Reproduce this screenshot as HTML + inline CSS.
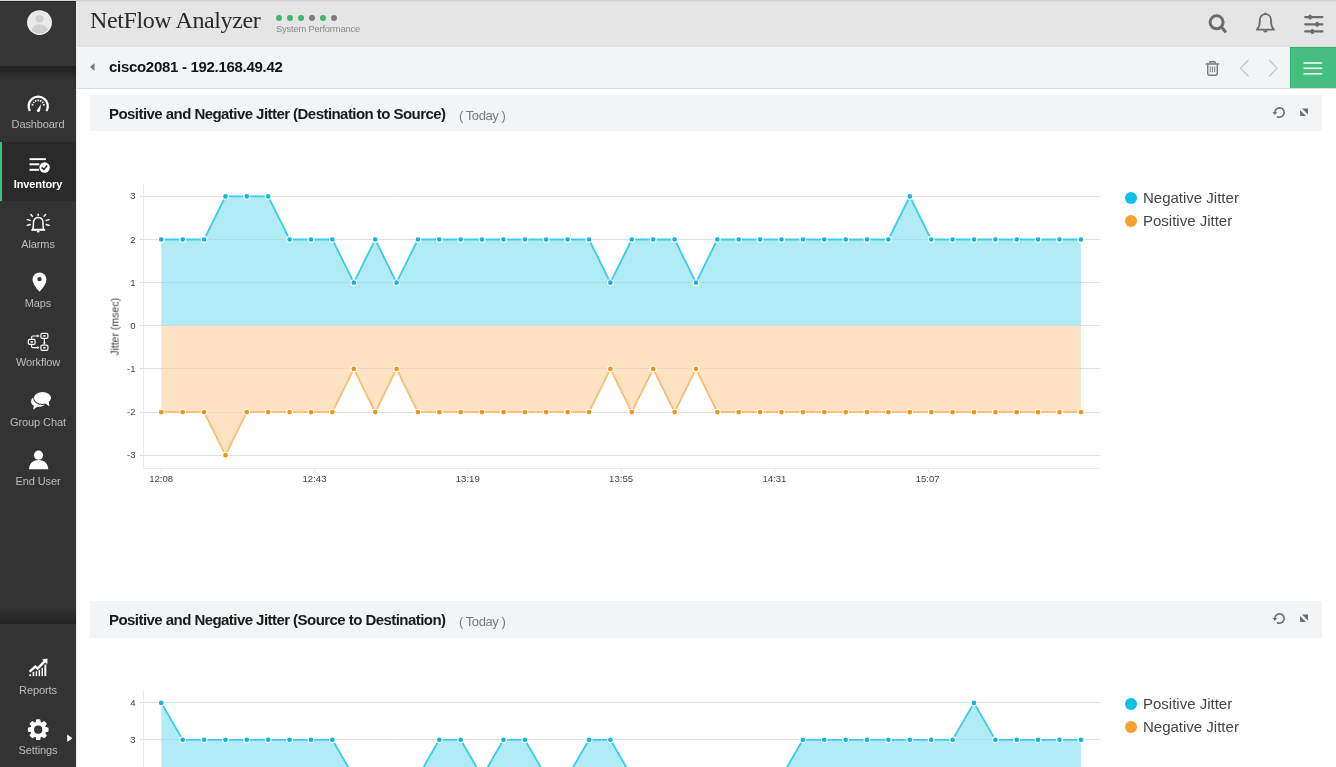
<!DOCTYPE html>
<html><head><meta charset="utf-8">
<style>
*{margin:0;padding:0;box-sizing:border-box}
html,body{width:1336px;height:767px;overflow:hidden;background:#fff;font-family:"Liberation Sans",sans-serif}
body *{will-change:transform}
.abs{position:absolute}
#side{position:absolute;left:0;top:0;width:76px;height:767px;background:#333}
#side .top{position:absolute;left:0;top:0;width:76px;height:66px;background:#363636}
#side .shade{position:absolute;left:0;top:66px;width:76px;height:14px;background:linear-gradient(#222 0,#262626 40%,#333 100%)}
#side .item{position:absolute;left:0;width:76px;text-align:center;color:#bdbdbd;font-size:11px;letter-spacing:-0.1px}
#side .item svg{position:absolute;left:0;top:0}
#side .lbl{position:absolute;left:0;width:76px;text-align:center}
#side .sel{background:#2a2a2a;color:#fff;font-weight:bold}
#side .selbar{position:absolute;left:0;top:142px;width:2px;height:59px;background:#3fc07a}
#side .bshade{position:absolute;left:0;top:606px;width:76px;height:18px;background:linear-gradient(#343434,#2c2c2c 45%,#232323)}
#vline{position:absolute;left:76px;top:1px;width:1px;height:766px;background:#ececec}
#hdr{position:absolute;left:76px;top:0;width:1260px;height:47px;background:#e5e5e5;border-top:1px solid #d4d4d4;border-bottom:1px solid #dedede;box-shadow:inset 0 1px 0 #dcdcdc}
#topline{position:absolute;left:0;top:0;width:76px;height:1px;background:#d4d4d4}
#side .topedge{position:absolute;left:0;top:1px;width:76px;height:1px;background:#222}
#title{position:absolute;left:89.5px;top:6.5px;font-family:"Liberation Serif",serif;font-size:24px;color:#2a2a2a;letter-spacing:-0.4px;white-space:nowrap}
.dot{position:absolute;top:14.9px;width:6.2px;height:6.2px;border-radius:50%}
#sysperf{position:absolute;left:276px;top:22.5px;font-size:9.4px;color:#8a8a8a;letter-spacing:-0.2px}
#crumb{position:absolute;left:77px;top:47px;width:1259px;height:42px;background:#f3f4f6;border-bottom:1px solid #dcdcdc}
#crumbtxt{position:absolute;left:108.5px;top:58px;font-size:15px;font-weight:bold;color:#141414;letter-spacing:-0.3px}
#green{position:absolute;left:1290px;top:47px;width:46px;height:41px;background:#45bf7f;box-shadow:inset 1px 1px 0 #2fb469}
.panel{position:absolute;left:90px;width:1232px;height:36px;background:#f3f4f6}
.ptitle{position:absolute;left:19px;top:10px;font-size:15px;font-weight:bold;color:#1a1a1a;letter-spacing:-0.55px;white-space:nowrap}
.ptoday{position:absolute;left:369px;top:13px;font-size:13px;color:#7a7a7a;letter-spacing:-0.45px;white-space:nowrap}
.legend{position:absolute;left:1125px;font-size:15px;color:#444}
.legend div{position:relative;height:22.5px;padding-left:18px}
.legend i{position:absolute;left:0;top:3px;width:12px;height:12px;border-radius:50%}
svg.chart{position:absolute;left:0;top:0}
</style></head><body>

<div id="side">
  <div class="top"></div>
  <div class="topedge"></div>
  <div class="shade"></div>
  <svg class="abs" style="left:0;top:0" width="76" height="40" viewBox="0 0 76 40">
    <circle cx="39.5" cy="22.6" r="12.4" fill="#f4f4f4"/>
    <circle cx="39.5" cy="22.6" r="11.2" fill="#e9e9e9"/>
    <circle cx="39.5" cy="18.8" r="3.9" fill="#cfcfcf"/>
    <path d="M31.54 30.36 A8.2 6.8 0 0 1 47.82 30.04 A11.2 11.2 0 0 1 31.54 30.36Z" fill="#cfcfcf"/>
  </svg>

  <div class="item" style="top:92px;height:50px">
    <svg width="76" height="24" viewBox="0 0 76 24">
      <path d="M29.89 19 A9.6 9.6 0 1 1 46.51 19" fill="none" stroke="#fff" stroke-width="2.3"/>
      <g stroke="#fff" stroke-width="1.5"><line x1="33.37" y1="12.91" x2="31.63" y2="12.44"/><line x1="34.37" y1="10.99" x2="32.99" y2="9.83"/><line x1="36.09" y1="9.67" x2="35.33" y2="8.04"/><line x1="38.20" y1="9.20" x2="38.20" y2="7.40"/><line x1="40.31" y1="9.67" x2="41.07" y2="8.04"/><line x1="42.03" y1="10.99" x2="43.41" y2="9.83"/><line x1="43.03" y1="12.91" x2="44.77" y2="12.44"/></g>
      <path d="M36.7 18.4 Q36.9 20 38.5 20 Q40.1 19.9 40.1 18.6 L41 12.2Z" fill="#fff"/>
    </svg>
    <div class="lbl" style="top:26px">Dashboard</div>
  </div>

  <div class="item sel" style="top:142px;height:59px">
    <svg width="76" height="40" viewBox="0 0 76 40">
      <g fill="#fff"><rect x="29.5" y="16.2" width="16.4" height="1.9"/><rect x="29.5" y="21.3" width="10" height="2"/><rect x="29.5" y="26.8" width="9.6" height="2"/></g>
      <circle cx="44.6" cy="25.5" r="5.9" fill="#2a2a2a"/>
      <circle cx="44.6" cy="25.5" r="5.2" fill="#fff"/>
      <path d="M41.6 25.4 L43.9 27.4 L47.2 23.6" fill="none" stroke="#2a2a2a" stroke-width="1.6"/>
    </svg>
    <div class="lbl" style="top:36px">Inventory</div>
  </div>
  <div class="selbar"></div>

  <div class="item" style="top:210px;height:50px">
    <svg width="76" height="26" viewBox="0 0 76 26">
      <path d="M32.6 19.6 C33.6 18 33.4 16 33.4 13 C33.4 9.6 35.4 7.6 38.2 7.6 C41 7.6 43 9.6 43 13 C43 16 42.8 18 43.8 19.6 Z" fill="none" stroke="#fff" stroke-width="1.5" stroke-linejoin="round"/>
      <rect x="31" y="19.2" width="14.4" height="1.6" rx="0.8" fill="#fff"/>
      <path d="M36.7 21 A1.5 1.5 0 0 0 39.7 21Z" fill="#fff"/>
      <g stroke="#fff" stroke-width="1.4" stroke-linecap="round">
        <line x1="38.2" y1="4.2" x2="38.2" y2="5.6"/>
        <line x1="30.8" y1="4.5" x2="32.3" y2="6.2"/><line x1="45.6" y1="4.5" x2="44.1" y2="6.2"/>
        <line x1="27.2" y1="9.6" x2="30.2" y2="10.4"/><line x1="49.2" y1="9.6" x2="46.2" y2="10.4"/>
        <line x1="27.2" y1="15.4" x2="30.2" y2="14.5"/><line x1="49.2" y1="15.4" x2="46.2" y2="14.5"/>
      </g>
    </svg>
    <div class="lbl" style="top:28px">Alarms</div>
  </div>

  <div class="item" style="top:270px;height:50px">
    <svg width="76" height="26" viewBox="0 0 76 26">
      <path d="M39.5 21.8 C35.2 17 32.6 13.6 32.6 9.3 A6.9 6.9 0 0 1 46.4 9.3 C46.4 13.6 43.8 17 39.5 21.8Z" fill="#fff"/>
      <circle cx="39.5" cy="9.1" r="2.2" fill="#333"/>
    </svg>
    <div class="lbl" style="top:27px">Maps</div>
  </div>

  <div class="item" style="top:330px;height:50px">
    <svg width="76" height="26" viewBox="0 0 76 26">
      <g fill="none" stroke="#fff" stroke-width="1.2">
        <rect x="28.3" y="9.3" width="6.8" height="5" rx="1.4"/>
        <rect x="40.9" y="3.4" width="7" height="5" rx="1.4"/>
        <rect x="40.9" y="15.1" width="7" height="5.2" rx="1.4"/>
        <path d="M31.6 9.3 V7.2 Q31.6 6 32.8 6 H37.6 M31.6 14.3 V16.4 Q31.6 17.6 32.8 17.6 H37.6 M44.4 8.4 V13"/>
      </g>
      <g fill="#fff"><path d="M37.2 4.6 L39.6 6 L37.2 7.4Z M37.2 16.2 L39.6 17.6 L37.2 19Z M43 12.6 L45.8 12.6 L44.4 14.8Z"/>
      <rect x="30.6" y="11.2" width="2.4" height="1.4"/><rect x="43.2" y="5.2" width="2.4" height="1.4"/><rect x="43.2" y="17" width="2.4" height="1.4"/></g>
    </svg>
    <div class="lbl" style="top:26px">Workflow</div>
  </div>

  <div class="item" style="top:390px;height:50px">
    <svg width="76" height="26" viewBox="0 0 76 26">
      <ellipse cx="38.6" cy="11.4" rx="7.6" ry="5.6" fill="#fff"/>
      <path d="M34 14.5 L33.2 19.8 L39 15.5Z" fill="#fff"/>
      <ellipse cx="42.5" cy="8" rx="9.3" ry="6.9" fill="#333"/>
      <path d="M44.5 13 L50.2 17.4 L49.4 11Z" fill="#333"/>
      <ellipse cx="42.5" cy="8" rx="8.5" ry="6.1" fill="#fff"/>
      <path d="M45 13 L49.4 16.6 L48.8 11.6Z" fill="#fff"/>
    </svg>
    <div class="lbl" style="top:26px">Group Chat</div>
  </div>

  <div class="item" style="top:448px;height:50px">
    <svg width="76" height="26" viewBox="0 0 76 26">
      <circle cx="38.5" cy="7.2" r="4.6" fill="#fff"/>
      <path d="M29 21.3 C29.2 15 33.5 12 38.6 12 C43.7 12 48 15 48.3 21.3Z" fill="#fff"/>
    </svg>
    <div class="lbl" style="top:27px">End User</div>
  </div>

  <div class="bshade"></div>

  <div class="item" style="top:655px;height:50px">
    <svg width="76" height="26" viewBox="0 0 76 26">
      <g fill="#fff">
        <rect x="29.3" y="19.4" width="1.8" height="1.7"/><rect x="32.6" y="16.9" width="1.6" height="4.2"/><rect x="35.7" y="16.2" width="1.4" height="4.9"/><rect x="38.6" y="15" width="1.4" height="6.1"/><rect x="41.5" y="12.9" width="1.5" height="8.2"/><rect x="44.4" y="9.6" width="1.9" height="11.5"/>
      </g>
      <path d="M29.6 16.6 L35.3 11.6 L37.6 13.6 L44.6 6.4" fill="none" stroke="#fff" stroke-width="2.4"/>
      <path d="M42 4.4 L47.5 3.6 L47.3 9.2Z" fill="#fff"/>
    </svg>
    <div class="lbl" style="top:29px">Reports</div>
  </div>

  <div class="item" style="top:716px;height:51px">
    <svg width="76" height="30" viewBox="0 0 76 30">
      <path fill="#fff" d="M36.13,6.96 L36.74,3.96 L39.66,3.96 L40.27,6.96 L41.47,7.46 L44.02,5.76 L46.09,7.83 L44.39,10.38 L44.89,11.58 L47.89,12.19 L47.89,15.11 L44.89,15.72 L44.39,16.92 L46.09,19.47 L44.02,21.54 L41.47,19.84 L40.27,20.34 L39.66,23.34 L36.74,23.34 L36.13,20.34 L34.93,19.84 L32.38,21.54 L30.31,19.47 L32.01,16.92 L31.51,15.72 L28.51,15.11 L28.51,12.19 L31.51,11.58 L32.01,10.38 L30.31,7.83 L32.38,5.76 L34.93,7.46Z" stroke="#fff" stroke-width="1.3" stroke-linejoin="round"/>
      <circle cx="38.2" cy="13.65" r="7.6" fill="#fff"/>
      <circle cx="38.2" cy="13.65" r="4.1" fill="#2a2a2a"/>
      <circle cx="38.2" cy="13.65" r="3.4" fill="#383838"/>
      <path d="M67.2 18.6 L72.4 22.3 L67.2 26Z" fill="#fff"/>
    </svg>
    <div class="lbl" style="top:28px">Settings</div>
  </div>
</div>

<div id="hdr"></div>
<div id="vline"></div>
<div id="topline"></div>
<div id="title">NetFlow Analyzer</div>
<div class="dot" style="left:275.6px;background:#3db86f"></div>
<div class="dot" style="left:286.9px;background:#3db86f"></div>
<div class="dot" style="left:297.9px;background:#3db86f"></div>
<div class="dot" style="left:309.3px;background:#7d7d7d"></div>
<div class="dot" style="left:320.1px;background:#3db86f"></div>
<div class="dot" style="left:331.3px;background:#7d7d7d"></div>
<div id="sysperf">System Performance</div>

<!-- header icons -->
<svg class="abs" style="left:1200px;top:5px" width="136" height="36" viewBox="1200 5 136 36">
  <circle cx="1216.6" cy="22.3" r="6.5" fill="none" stroke="#6b6b6b" stroke-width="3"/>
  <line x1="1221.6" y1="27.3" x2="1225.2" y2="31.4" stroke="#6b6b6b" stroke-width="3" stroke-linecap="round"/>
  <path d="M1256.8 29.6 C1258.8 27.6 1259.8 25.5 1259.8 21.8 L1259.8 19.8 C1259.8 16.5 1262.1 14.2 1265.4 14.2 C1268.7 14.2 1271 16.5 1271 19.8 L1271 21.8 C1271 25.5 1272 27.6 1274 29.6 Z" fill="none" stroke="#6b6b6b" stroke-width="1.8" stroke-linejoin="round"/>
  <path d="M1263 30.2 A2.4 2.4 0 0 0 1267.8 30.2Z" fill="#6b6b6b"/>
  <circle cx="1265.4" cy="13.6" r="1.2" fill="#6b6b6b"/>
  <g stroke="#6b6b6b" stroke-width="2.2" stroke-linecap="round">
    <line x1="1305.2" y1="17.1" x2="1322.4" y2="17.1"/><line x1="1305.2" y1="24.3" x2="1322.4" y2="24.3"/><line x1="1305.2" y1="31.4" x2="1322.4" y2="31.4"/>
  </g>
  <g fill="#6b6b6b"><rect x="1308.5" y="14.6" width="3.2" height="5" rx="1.5"/><rect x="1315.5" y="21.8" width="3.2" height="5" rx="1.5"/><rect x="1310.8" y="28.9" width="3.2" height="5" rx="1.5"/></g>
</svg>

<div id="crumb"></div>
<svg class="abs" style="left:88px;top:60px" width="10" height="14" viewBox="0 0 10 14"><path d="M2 7 L6.5 3 L6.5 11Z" fill="#777"/></svg>
<div id="crumbtxt">cisco2081 - 192.168.49.42</div>
<svg class="abs" style="left:1200px;top:55px" width="90" height="26" viewBox="1200 55 90 26">
  <g fill="none" stroke="#777" stroke-width="1.4">
    <path d="M1206.3 64 H1218.7" stroke-linecap="round"/><path d="M1209.6 63.6 V62.8 Q1209.6 61.7 1210.8 61.7 H1214.2 Q1215.4 61.7 1215.4 62.8 V63.6"/>
    <path d="M1207.7 64.4 V73.6 Q1207.7 75.2 1209.3 75.2 H1215.7 Q1217.3 75.2 1217.3 73.6 V64.4"/>
  </g>
  <g stroke="#888" stroke-width="1.1"><path d="M1210.3 66.6 V72.3 M1212.5 66.6 V72.3 M1214.7 66.6 V72.3"/></g>
  <path d="M1248.6 60 L1240.4 68.2 L1248.6 76.4" fill="none" stroke="#c4c4c4" stroke-width="1.2"/>
  <path d="M1269 60 L1277.2 68.2 L1269 76.4" fill="none" stroke="#c4c4c4" stroke-width="1.2"/>
</svg>
<div id="green"></div>
<svg class="abs" style="left:1290px;top:47px" width="46" height="41" viewBox="0 0 46 41"><g stroke="#fff" stroke-width="1.5"><line x1="13.5" y1="16" x2="32.2" y2="16"/><line x1="13.5" y1="21.3" x2="32.2" y2="21.3"/><line x1="13.5" y1="26.8" x2="32.2" y2="26.8"/></g></svg>

<!-- panel 1 -->
<div class="panel" style="top:95px">
  <div class="ptitle">Positive and Negative Jitter (Destination to Source)</div>
  <div class="ptoday">( Today )</div>
</div>
<!-- panel 2 -->
<div class="panel" style="top:601px;height:37px">
  <div class="ptitle">Positive and Negative Jitter (Source to Destination)</div>
  <div class="ptoday">( Today )</div>
</div>
<svg class="abs" style="left:1260px;top:95px" width="62" height="36" viewBox="1260 95 62 36" id="picons1">
  <path d="M1276.9 116.5 A4.7 4.7 0 1 0 1274.8 111.8" fill="none" stroke="#6f6f6f" stroke-width="1.6"/>
  <path d="M1272.5 112 L1277.2 112 L1274.85 115Z" fill="#6f6f6f"/>
  <path d="M1300 116 L1300 110 L1306 116Z M1302 108.5 L1308 108.5 L1308 114.5Z" fill="#6f6f6f"/>
</svg>
<svg class="abs" style="left:1260px;top:601px" width="62" height="36" viewBox="1260 95 62 36">
  <path d="M1276.9 116.5 A4.7 4.7 0 1 0 1274.8 111.8" fill="none" stroke="#6f6f6f" stroke-width="1.6"/>
  <path d="M1272.5 112 L1277.2 112 L1274.85 115Z" fill="#6f6f6f"/>
  <path d="M1300 116 L1300 110 L1306 116Z M1302 108.5 L1308 108.5 L1308 114.5Z" fill="#6f6f6f"/>
</svg>

<svg class="chart" width="1336" height="767" viewBox="0 0 1336 767"><g stroke="#ebebeb" stroke-width="1"><line x1="139.5" y1="196.5" x2="1099.5" y2="196.5"/><line x1="139.5" y1="239.5" x2="1099.5" y2="239.5"/><line x1="139.5" y1="282.5" x2="1099.5" y2="282.5"/><line x1="139.5" y1="325.5" x2="1099.5" y2="325.5"/><line x1="139.5" y1="368.5" x2="1099.5" y2="368.5"/><line x1="139.5" y1="412.5" x2="1099.5" y2="412.5"/><line x1="139.5" y1="455.5" x2="1099.5" y2="455.5"/><line x1="143.5" y1="183.4" x2="143.5" y2="468.3"/><line x1="143" y1="468.5" x2="1100" y2="468.5"/></g><path d="M161.3,325.8 L161.3,239.5 L182.7,239.5 L204.1,239.5 L225.5,196.4 L246.8,196.4 L268.2,196.4 L289.6,239.5 L311.0,239.5 L332.4,239.5 L353.8,282.7 L375.2,239.5 L396.5,282.7 L417.9,239.5 L439.3,239.5 L460.7,239.5 L482.1,239.5 L503.5,239.5 L524.9,239.5 L546.2,239.5 L567.6,239.5 L589.0,239.5 L610.4,282.7 L631.8,239.5 L653.2,239.5 L674.6,239.5 L696.0,282.7 L717.3,239.5 L738.7,239.5 L760.1,239.5 L781.5,239.5 L802.9,239.5 L824.3,239.5 L845.7,239.5 L867.0,239.5 L888.4,239.5 L909.8,196.4 L931.2,239.5 L952.6,239.5 L974.0,239.5 L995.4,239.5 L1016.7,239.5 L1038.1,239.5 L1059.5,239.5 L1080.9,239.5 L1080.9,325.8 Z" fill="#b1ecf6"/><path d="M161.3,325.8 L161.3,412.1 L182.7,412.1 L204.1,412.1 L225.5,455.2 L246.8,412.1 L268.2,412.1 L289.6,412.1 L311.0,412.1 L332.4,412.1 L353.8,368.9 L375.2,412.1 L396.5,368.9 L417.9,412.1 L439.3,412.1 L460.7,412.1 L482.1,412.1 L503.5,412.1 L524.9,412.1 L546.2,412.1 L567.6,412.1 L589.0,412.1 L610.4,368.9 L631.8,412.1 L653.2,368.9 L674.6,412.1 L696.0,368.9 L717.3,412.1 L738.7,412.1 L760.1,412.1 L781.5,412.1 L802.9,412.1 L824.3,412.1 L845.7,412.1 L867.0,412.1 L888.4,412.1 L909.8,412.1 L931.2,412.1 L952.6,412.1 L974.0,412.1 L995.4,412.1 L1016.7,412.1 L1038.1,412.1 L1059.5,412.1 L1080.9,412.1 L1080.9,325.8 Z" fill="#fde3c3"/><g stroke="#000" stroke-opacity="0.05" stroke-width="1"><line x1="139.5" y1="196.5" x2="1099.5" y2="196.5"/><line x1="139.5" y1="239.5" x2="1099.5" y2="239.5"/><line x1="139.5" y1="282.5" x2="1099.5" y2="282.5"/><line x1="139.5" y1="325.5" x2="1099.5" y2="325.5"/><line x1="139.5" y1="368.5" x2="1099.5" y2="368.5"/><line x1="139.5" y1="412.5" x2="1099.5" y2="412.5"/><line x1="139.5" y1="455.5" x2="1099.5" y2="455.5"/></g><path d="M161.3,239.5 L182.7,239.5 L204.1,239.5 L225.5,196.4 L246.8,196.4 L268.2,196.4 L289.6,239.5 L311.0,239.5 L332.4,239.5 L353.8,282.7 L375.2,239.5 L396.5,282.7 L417.9,239.5 L439.3,239.5 L460.7,239.5 L482.1,239.5 L503.5,239.5 L524.9,239.5 L546.2,239.5 L567.6,239.5 L589.0,239.5 L610.4,282.7 L631.8,239.5 L653.2,239.5 L674.6,239.5 L696.0,282.7 L717.3,239.5 L738.7,239.5 L760.1,239.5 L781.5,239.5 L802.9,239.5 L824.3,239.5 L845.7,239.5 L867.0,239.5 L888.4,239.5 L909.8,196.4 L931.2,239.5 L952.6,239.5 L974.0,239.5 L995.4,239.5 L1016.7,239.5 L1038.1,239.5 L1059.5,239.5 L1080.9,239.5" fill="none" stroke="#3ecde9" stroke-width="1.8" stroke-linejoin="round"/><path d="M161.3,412.1 L182.7,412.1 L204.1,412.1 L225.5,455.2 L246.8,412.1 L268.2,412.1 L289.6,412.1 L311.0,412.1 L332.4,412.1 L353.8,368.9 L375.2,412.1 L396.5,368.9 L417.9,412.1 L439.3,412.1 L460.7,412.1 L482.1,412.1 L503.5,412.1 L524.9,412.1 L546.2,412.1 L567.6,412.1 L589.0,412.1 L610.4,368.9 L631.8,412.1 L653.2,368.9 L674.6,412.1 L696.0,368.9 L717.3,412.1 L738.7,412.1 L760.1,412.1 L781.5,412.1 L802.9,412.1 L824.3,412.1 L845.7,412.1 L867.0,412.1 L888.4,412.1 L909.8,412.1 L931.2,412.1 L952.6,412.1 L974.0,412.1 L995.4,412.1 L1016.7,412.1 L1038.1,412.1 L1059.5,412.1 L1080.9,412.1" fill="none" stroke="#f8bd6e" stroke-width="1.8" stroke-linejoin="round"/><g fill="#0fb6df" stroke="#fff" stroke-width="1.1"><circle cx="161.3" cy="239.5" r="2.9"/><circle cx="182.7" cy="239.5" r="2.9"/><circle cx="204.1" cy="239.5" r="2.9"/><circle cx="225.5" cy="196.4" r="2.9"/><circle cx="246.8" cy="196.4" r="2.9"/><circle cx="268.2" cy="196.4" r="2.9"/><circle cx="289.6" cy="239.5" r="2.9"/><circle cx="311.0" cy="239.5" r="2.9"/><circle cx="332.4" cy="239.5" r="2.9"/><circle cx="353.8" cy="282.7" r="2.9"/><circle cx="375.2" cy="239.5" r="2.9"/><circle cx="396.5" cy="282.7" r="2.9"/><circle cx="417.9" cy="239.5" r="2.9"/><circle cx="439.3" cy="239.5" r="2.9"/><circle cx="460.7" cy="239.5" r="2.9"/><circle cx="482.1" cy="239.5" r="2.9"/><circle cx="503.5" cy="239.5" r="2.9"/><circle cx="524.9" cy="239.5" r="2.9"/><circle cx="546.2" cy="239.5" r="2.9"/><circle cx="567.6" cy="239.5" r="2.9"/><circle cx="589.0" cy="239.5" r="2.9"/><circle cx="610.4" cy="282.7" r="2.9"/><circle cx="631.8" cy="239.5" r="2.9"/><circle cx="653.2" cy="239.5" r="2.9"/><circle cx="674.6" cy="239.5" r="2.9"/><circle cx="696.0" cy="282.7" r="2.9"/><circle cx="717.3" cy="239.5" r="2.9"/><circle cx="738.7" cy="239.5" r="2.9"/><circle cx="760.1" cy="239.5" r="2.9"/><circle cx="781.5" cy="239.5" r="2.9"/><circle cx="802.9" cy="239.5" r="2.9"/><circle cx="824.3" cy="239.5" r="2.9"/><circle cx="845.7" cy="239.5" r="2.9"/><circle cx="867.0" cy="239.5" r="2.9"/><circle cx="888.4" cy="239.5" r="2.9"/><circle cx="909.8" cy="196.4" r="2.9"/><circle cx="931.2" cy="239.5" r="2.9"/><circle cx="952.6" cy="239.5" r="2.9"/><circle cx="974.0" cy="239.5" r="2.9"/><circle cx="995.4" cy="239.5" r="2.9"/><circle cx="1016.7" cy="239.5" r="2.9"/><circle cx="1038.1" cy="239.5" r="2.9"/><circle cx="1059.5" cy="239.5" r="2.9"/><circle cx="1080.9" cy="239.5" r="2.9"/></g><g fill="#f7930f" stroke="#fff" stroke-width="1.1"><circle cx="161.3" cy="412.1" r="2.9"/><circle cx="182.7" cy="412.1" r="2.9"/><circle cx="204.1" cy="412.1" r="2.9"/><circle cx="225.5" cy="455.2" r="2.9"/><circle cx="246.8" cy="412.1" r="2.9"/><circle cx="268.2" cy="412.1" r="2.9"/><circle cx="289.6" cy="412.1" r="2.9"/><circle cx="311.0" cy="412.1" r="2.9"/><circle cx="332.4" cy="412.1" r="2.9"/><circle cx="353.8" cy="368.9" r="2.9"/><circle cx="375.2" cy="412.1" r="2.9"/><circle cx="396.5" cy="368.9" r="2.9"/><circle cx="417.9" cy="412.1" r="2.9"/><circle cx="439.3" cy="412.1" r="2.9"/><circle cx="460.7" cy="412.1" r="2.9"/><circle cx="482.1" cy="412.1" r="2.9"/><circle cx="503.5" cy="412.1" r="2.9"/><circle cx="524.9" cy="412.1" r="2.9"/><circle cx="546.2" cy="412.1" r="2.9"/><circle cx="567.6" cy="412.1" r="2.9"/><circle cx="589.0" cy="412.1" r="2.9"/><circle cx="610.4" cy="368.9" r="2.9"/><circle cx="631.8" cy="412.1" r="2.9"/><circle cx="653.2" cy="368.9" r="2.9"/><circle cx="674.6" cy="412.1" r="2.9"/><circle cx="696.0" cy="368.9" r="2.9"/><circle cx="717.3" cy="412.1" r="2.9"/><circle cx="738.7" cy="412.1" r="2.9"/><circle cx="760.1" cy="412.1" r="2.9"/><circle cx="781.5" cy="412.1" r="2.9"/><circle cx="802.9" cy="412.1" r="2.9"/><circle cx="824.3" cy="412.1" r="2.9"/><circle cx="845.7" cy="412.1" r="2.9"/><circle cx="867.0" cy="412.1" r="2.9"/><circle cx="888.4" cy="412.1" r="2.9"/><circle cx="909.8" cy="412.1" r="2.9"/><circle cx="931.2" cy="412.1" r="2.9"/><circle cx="952.6" cy="412.1" r="2.9"/><circle cx="974.0" cy="412.1" r="2.9"/><circle cx="995.4" cy="412.1" r="2.9"/><circle cx="1016.7" cy="412.1" r="2.9"/><circle cx="1038.1" cy="412.1" r="2.9"/><circle cx="1059.5" cy="412.1" r="2.9"/><circle cx="1080.9" cy="412.1" r="2.9"/></g><g font-family="Liberation Sans, sans-serif" font-size="9.6" fill="#444"><text x="135.5" y="199.4" text-anchor="end">3</text><text x="135.5" y="242.5" text-anchor="end">2</text><text x="135.5" y="285.7" text-anchor="end">1</text><text x="135.5" y="328.8" text-anchor="end">0</text><text x="135.5" y="371.9" text-anchor="end">-1</text><text x="135.5" y="415.1" text-anchor="end">-2</text><text x="135.5" y="458.2" text-anchor="end">-3</text><line x1="161.5" y1="469" x2="161.5" y2="472" stroke="#ebebeb"/><text x="161.2" y="482.0" text-anchor="middle">12:08</text><line x1="314.5" y1="469" x2="314.5" y2="472" stroke="#ebebeb"/><text x="314.5" y="482.0" text-anchor="middle">12:43</text><line x1="468.5" y1="469" x2="468.5" y2="472" stroke="#ebebeb"/><text x="467.8" y="482.0" text-anchor="middle">13:19</text><line x1="621.5" y1="469" x2="621.5" y2="472" stroke="#ebebeb"/><text x="621.1" y="482.0" text-anchor="middle">13:55</text><line x1="774.5" y1="469" x2="774.5" y2="472" stroke="#ebebeb"/><text x="774.4" y="482.0" text-anchor="middle">14:31</text><line x1="928.5" y1="469" x2="928.5" y2="472" stroke="#ebebeb"/><text x="927.7" y="482.0" text-anchor="middle">15:07</text><text transform="translate(118.6,326.8) rotate(-90)" text-anchor="middle" font-size="10.5" fill="#3a3a3a">Jitter (msec)</text></g><g stroke="#ebebeb" stroke-width="1"><line x1="139.5" y1="702.5" x2="1099.5" y2="702.5"/><line x1="139.5" y1="739.5" x2="1099.5" y2="739.5"/><line x1="139.5" y1="776.5" x2="1099.5" y2="776.5"/><line x1="139.5" y1="813.5" x2="1099.5" y2="813.5"/><line x1="139.5" y1="850.5" x2="1099.5" y2="850.5"/><line x1="139.5" y1="887.5" x2="1099.5" y2="887.5"/><line x1="139.5" y1="924.5" x2="1099.5" y2="924.5"/><line x1="139.5" y1="961.5" x2="1099.5" y2="961.5"/><line x1="139.5" y1="998.5" x2="1099.5" y2="998.5"/><line x1="143.5" y1="689.9" x2="143.5" y2="1011.2"/><line x1="143" y1="1011.5" x2="1100" y2="1011.5"/></g><path d="M161.3,850.5 L161.3,702.9 L182.7,739.8 L204.1,739.8 L225.5,739.8 L246.8,739.8 L268.2,739.8 L289.6,739.8 L311.0,739.8 L332.4,739.8 L353.8,776.7 L375.2,776.7 L396.5,776.7 L417.9,776.7 L439.3,739.8 L460.7,739.8 L482.1,776.7 L503.5,739.8 L524.9,739.8 L546.2,776.7 L567.6,776.7 L589.0,739.8 L610.4,739.8 L631.8,776.7 L653.2,776.7 L674.6,776.7 L696.0,776.7 L717.3,776.7 L738.7,776.7 L760.1,776.7 L781.5,776.7 L802.9,739.8 L824.3,739.8 L845.7,739.8 L867.0,739.8 L888.4,739.8 L909.8,739.8 L931.2,739.8 L952.6,739.8 L974.0,702.9 L995.4,739.8 L1016.7,739.8 L1038.1,739.8 L1059.5,739.8 L1080.9,739.8 L1080.9,850.5 Z" fill="#b1ecf6"/><path d="M161.3,850.5 L161.3,924.3 L182.7,924.3 L204.1,924.3 L225.5,924.3 L246.8,924.3 L268.2,924.3 L289.6,924.3 L311.0,924.3 L332.4,924.3 L353.8,924.3 L375.2,924.3 L396.5,924.3 L417.9,924.3 L439.3,924.3 L460.7,924.3 L482.1,924.3 L503.5,924.3 L524.9,924.3 L546.2,924.3 L567.6,924.3 L589.0,924.3 L610.4,924.3 L631.8,924.3 L653.2,924.3 L674.6,924.3 L696.0,924.3 L717.3,924.3 L738.7,924.3 L760.1,924.3 L781.5,924.3 L802.9,924.3 L824.3,924.3 L845.7,924.3 L867.0,924.3 L888.4,924.3 L909.8,924.3 L931.2,924.3 L952.6,924.3 L974.0,924.3 L995.4,924.3 L1016.7,924.3 L1038.1,924.3 L1059.5,924.3 L1080.9,924.3 L1080.9,850.5 Z" fill="#fde3c3"/><g stroke="#000" stroke-opacity="0.05" stroke-width="1"><line x1="139.5" y1="702.5" x2="1099.5" y2="702.5"/><line x1="139.5" y1="739.5" x2="1099.5" y2="739.5"/><line x1="139.5" y1="776.5" x2="1099.5" y2="776.5"/><line x1="139.5" y1="813.5" x2="1099.5" y2="813.5"/><line x1="139.5" y1="850.5" x2="1099.5" y2="850.5"/><line x1="139.5" y1="887.5" x2="1099.5" y2="887.5"/><line x1="139.5" y1="924.5" x2="1099.5" y2="924.5"/><line x1="139.5" y1="961.5" x2="1099.5" y2="961.5"/><line x1="139.5" y1="998.5" x2="1099.5" y2="998.5"/></g><path d="M161.3,702.9 L182.7,739.8 L204.1,739.8 L225.5,739.8 L246.8,739.8 L268.2,739.8 L289.6,739.8 L311.0,739.8 L332.4,739.8 L353.8,776.7 L375.2,776.7 L396.5,776.7 L417.9,776.7 L439.3,739.8 L460.7,739.8 L482.1,776.7 L503.5,739.8 L524.9,739.8 L546.2,776.7 L567.6,776.7 L589.0,739.8 L610.4,739.8 L631.8,776.7 L653.2,776.7 L674.6,776.7 L696.0,776.7 L717.3,776.7 L738.7,776.7 L760.1,776.7 L781.5,776.7 L802.9,739.8 L824.3,739.8 L845.7,739.8 L867.0,739.8 L888.4,739.8 L909.8,739.8 L931.2,739.8 L952.6,739.8 L974.0,702.9 L995.4,739.8 L1016.7,739.8 L1038.1,739.8 L1059.5,739.8 L1080.9,739.8" fill="none" stroke="#3ecde9" stroke-width="1.8" stroke-linejoin="round"/><path d="M161.3,924.3 L182.7,924.3 L204.1,924.3 L225.5,924.3 L246.8,924.3 L268.2,924.3 L289.6,924.3 L311.0,924.3 L332.4,924.3 L353.8,924.3 L375.2,924.3 L396.5,924.3 L417.9,924.3 L439.3,924.3 L460.7,924.3 L482.1,924.3 L503.5,924.3 L524.9,924.3 L546.2,924.3 L567.6,924.3 L589.0,924.3 L610.4,924.3 L631.8,924.3 L653.2,924.3 L674.6,924.3 L696.0,924.3 L717.3,924.3 L738.7,924.3 L760.1,924.3 L781.5,924.3 L802.9,924.3 L824.3,924.3 L845.7,924.3 L867.0,924.3 L888.4,924.3 L909.8,924.3 L931.2,924.3 L952.6,924.3 L974.0,924.3 L995.4,924.3 L1016.7,924.3 L1038.1,924.3 L1059.5,924.3 L1080.9,924.3" fill="none" stroke="#f8bd6e" stroke-width="1.8" stroke-linejoin="round"/><g fill="#0fb6df" stroke="#fff" stroke-width="1.1"><circle cx="161.3" cy="702.9" r="2.9"/><circle cx="182.7" cy="739.8" r="2.9"/><circle cx="204.1" cy="739.8" r="2.9"/><circle cx="225.5" cy="739.8" r="2.9"/><circle cx="246.8" cy="739.8" r="2.9"/><circle cx="268.2" cy="739.8" r="2.9"/><circle cx="289.6" cy="739.8" r="2.9"/><circle cx="311.0" cy="739.8" r="2.9"/><circle cx="332.4" cy="739.8" r="2.9"/><circle cx="353.8" cy="776.7" r="2.9"/><circle cx="375.2" cy="776.7" r="2.9"/><circle cx="396.5" cy="776.7" r="2.9"/><circle cx="417.9" cy="776.7" r="2.9"/><circle cx="439.3" cy="739.8" r="2.9"/><circle cx="460.7" cy="739.8" r="2.9"/><circle cx="482.1" cy="776.7" r="2.9"/><circle cx="503.5" cy="739.8" r="2.9"/><circle cx="524.9" cy="739.8" r="2.9"/><circle cx="546.2" cy="776.7" r="2.9"/><circle cx="567.6" cy="776.7" r="2.9"/><circle cx="589.0" cy="739.8" r="2.9"/><circle cx="610.4" cy="739.8" r="2.9"/><circle cx="631.8" cy="776.7" r="2.9"/><circle cx="653.2" cy="776.7" r="2.9"/><circle cx="674.6" cy="776.7" r="2.9"/><circle cx="696.0" cy="776.7" r="2.9"/><circle cx="717.3" cy="776.7" r="2.9"/><circle cx="738.7" cy="776.7" r="2.9"/><circle cx="760.1" cy="776.7" r="2.9"/><circle cx="781.5" cy="776.7" r="2.9"/><circle cx="802.9" cy="739.8" r="2.9"/><circle cx="824.3" cy="739.8" r="2.9"/><circle cx="845.7" cy="739.8" r="2.9"/><circle cx="867.0" cy="739.8" r="2.9"/><circle cx="888.4" cy="739.8" r="2.9"/><circle cx="909.8" cy="739.8" r="2.9"/><circle cx="931.2" cy="739.8" r="2.9"/><circle cx="952.6" cy="739.8" r="2.9"/><circle cx="974.0" cy="702.9" r="2.9"/><circle cx="995.4" cy="739.8" r="2.9"/><circle cx="1016.7" cy="739.8" r="2.9"/><circle cx="1038.1" cy="739.8" r="2.9"/><circle cx="1059.5" cy="739.8" r="2.9"/><circle cx="1080.9" cy="739.8" r="2.9"/></g><g fill="#f7930f" stroke="#fff" stroke-width="1.1"><circle cx="161.3" cy="924.3" r="2.9"/><circle cx="182.7" cy="924.3" r="2.9"/><circle cx="204.1" cy="924.3" r="2.9"/><circle cx="225.5" cy="924.3" r="2.9"/><circle cx="246.8" cy="924.3" r="2.9"/><circle cx="268.2" cy="924.3" r="2.9"/><circle cx="289.6" cy="924.3" r="2.9"/><circle cx="311.0" cy="924.3" r="2.9"/><circle cx="332.4" cy="924.3" r="2.9"/><circle cx="353.8" cy="924.3" r="2.9"/><circle cx="375.2" cy="924.3" r="2.9"/><circle cx="396.5" cy="924.3" r="2.9"/><circle cx="417.9" cy="924.3" r="2.9"/><circle cx="439.3" cy="924.3" r="2.9"/><circle cx="460.7" cy="924.3" r="2.9"/><circle cx="482.1" cy="924.3" r="2.9"/><circle cx="503.5" cy="924.3" r="2.9"/><circle cx="524.9" cy="924.3" r="2.9"/><circle cx="546.2" cy="924.3" r="2.9"/><circle cx="567.6" cy="924.3" r="2.9"/><circle cx="589.0" cy="924.3" r="2.9"/><circle cx="610.4" cy="924.3" r="2.9"/><circle cx="631.8" cy="924.3" r="2.9"/><circle cx="653.2" cy="924.3" r="2.9"/><circle cx="674.6" cy="924.3" r="2.9"/><circle cx="696.0" cy="924.3" r="2.9"/><circle cx="717.3" cy="924.3" r="2.9"/><circle cx="738.7" cy="924.3" r="2.9"/><circle cx="760.1" cy="924.3" r="2.9"/><circle cx="781.5" cy="924.3" r="2.9"/><circle cx="802.9" cy="924.3" r="2.9"/><circle cx="824.3" cy="924.3" r="2.9"/><circle cx="845.7" cy="924.3" r="2.9"/><circle cx="867.0" cy="924.3" r="2.9"/><circle cx="888.4" cy="924.3" r="2.9"/><circle cx="909.8" cy="924.3" r="2.9"/><circle cx="931.2" cy="924.3" r="2.9"/><circle cx="952.6" cy="924.3" r="2.9"/><circle cx="974.0" cy="924.3" r="2.9"/><circle cx="995.4" cy="924.3" r="2.9"/><circle cx="1016.7" cy="924.3" r="2.9"/><circle cx="1038.1" cy="924.3" r="2.9"/><circle cx="1059.5" cy="924.3" r="2.9"/><circle cx="1080.9" cy="924.3" r="2.9"/></g><g font-family="Liberation Sans, sans-serif" font-size="9.6" fill="#444"><text x="135.5" y="705.9" text-anchor="end">4</text><text x="135.5" y="742.8" text-anchor="end">3</text><text x="135.5" y="779.7" text-anchor="end">2</text><text x="135.5" y="816.6" text-anchor="end">1</text><text x="135.5" y="853.5" text-anchor="end">0</text><text x="135.5" y="890.4" text-anchor="end">-1</text><text x="135.5" y="927.3" text-anchor="end">-2</text><text x="135.5" y="964.2" text-anchor="end">-3</text><text x="135.5" y="1001.1" text-anchor="end">-4</text><line x1="161.5" y1="1012" x2="161.5" y2="1015" stroke="#ebebeb"/><text x="161.2" y="1024.9" text-anchor="middle">12:08</text><line x1="314.5" y1="1012" x2="314.5" y2="1015" stroke="#ebebeb"/><text x="314.5" y="1024.9" text-anchor="middle">12:43</text><line x1="468.5" y1="1012" x2="468.5" y2="1015" stroke="#ebebeb"/><text x="467.8" y="1024.9" text-anchor="middle">13:19</text><line x1="621.5" y1="1012" x2="621.5" y2="1015" stroke="#ebebeb"/><text x="621.1" y="1024.9" text-anchor="middle">13:55</text><line x1="774.5" y1="1012" x2="774.5" y2="1015" stroke="#ebebeb"/><text x="774.4" y="1024.9" text-anchor="middle">14:31</text><line x1="928.5" y1="1012" x2="928.5" y2="1015" stroke="#ebebeb"/><text x="927.7" y="1024.9" text-anchor="middle">15:07</text><text transform="translate(118.6,851.5) rotate(-90)" text-anchor="middle" font-size="10.5" fill="#3a3a3a">Jitter (msec)</text></g></svg>

<div class="legend" style="top:189px">
  <div><i style="background:#0cc0e8"></i>Negative Jitter</div>
  <div><i style="background:#f9a12a"></i>Positive Jitter</div>
</div>
<div class="legend" style="top:695px">
  <div><i style="background:#0cc0e8"></i>Positive Jitter</div>
  <div><i style="background:#f9a12a"></i>Negative Jitter</div>
</div>

</body></html>
